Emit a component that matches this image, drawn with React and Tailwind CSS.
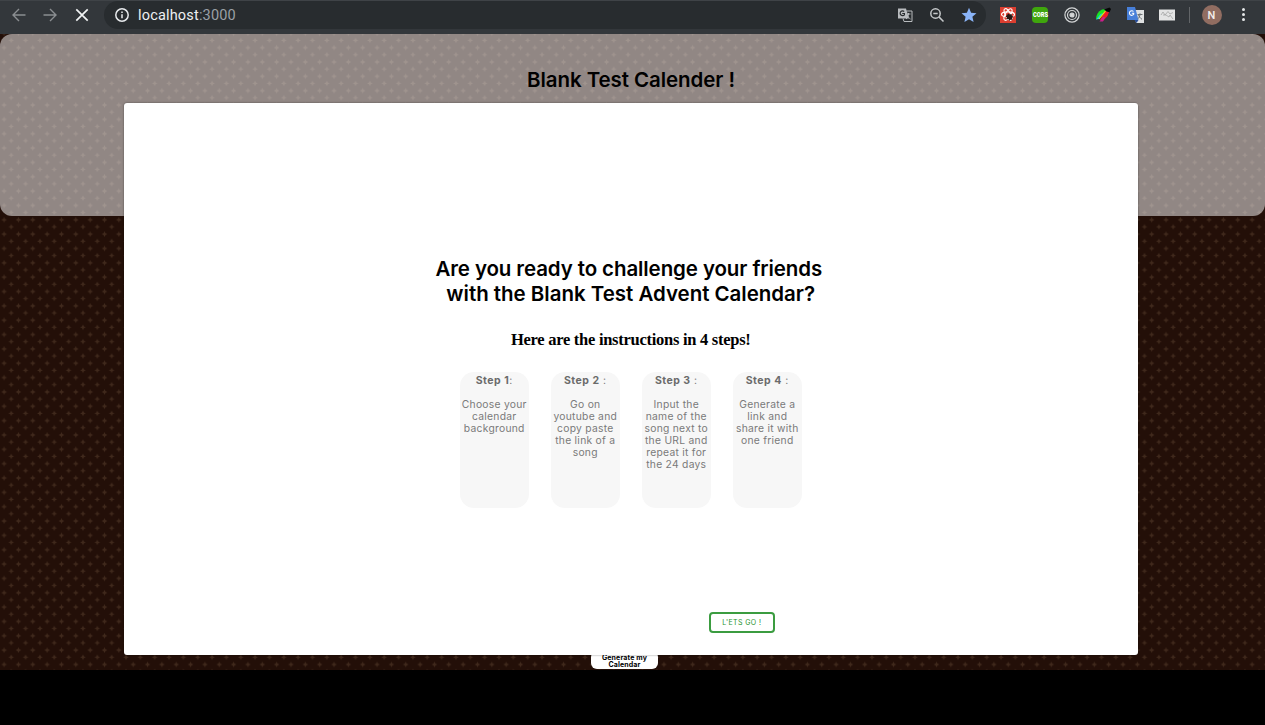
import React from "react";

const steps = [
  { n: "Step 1", c: ":", lines: ["Choose your", "calendar", "background"] },
  { n: "Step 2", c: " :", lines: ["Go on", "youtube and", "copy paste", "the link of a", "song"] },
  { n: "Step 3", c: " :", lines: ["Input the", "name of the", "song next to", "the URL and", "repeat it for", "the 24 days"] },
  { n: "Step 4", c: " :", lines: ["Generate a", "link and", "share it with", "one friend"] },
];

function Texture() {
  return (
    <svg className="absolute inset-0 h-full w-full" aria-hidden="true">
      <defs>
        <pattern id="dots" width="14.345" height="14.345" patternUnits="userSpaceOnUse" patternTransform="translate(-3.1 -4.5)">
          <g fill="#40291c">
            <path d="M7.2 1 8.100 2.900l1.900.9-1.900.9-.9 1.900-.9-1.900-1.900-.9 1.900-.9z" />
            <path d="M14.345 8.100l.9 1.900 1.900.9-1.900.9-.9 1.900-.9-1.900-1.900-.9 1.900-.9z" />
            <path d="M0 8.100l.9 1.900 1.900.9-1.900.9-.9 1.900-.9-1.900-1.900-.9 1.900-.9z" />
          </g>
        </pattern>
      </defs>
      <rect width="100%" height="100%" fill="url(#dots)" />
    </svg>
  );
}

function BrowserBar() {
  return (
    <header className="relative flex h-[33.500px] shrink-0 items-center border-t border-[#3f4347] bg-[#33373b] pb-[5px]">
      <svg className="ml-[11px] h-4 w-4" viewBox="0 0 16 16" fill="none" stroke="#8b8e91" strokeWidth="1.4">
        <path d="M14.500 8H2M8 2 2 8l6 6" />
      </svg>
      <svg className="ml-[15px] h-4 w-4" viewBox="0 0 16 16" fill="none" stroke="#8b8e91" strokeWidth="1.4">
        <path d="M1.500 8H14M8 2l6 6-6 6" />
      </svg>
      <svg className="ml-[16px] h-4 w-4" viewBox="0 0 16 16" fill="none" stroke="#f1f3f4" strokeWidth="1.700">
        <path d="m2.300 2.300 11.400 11.400m0-11.400L2.300 13.700" />
      </svg>
      <div className="ml-[14px] flex h-7 w-[882px] items-center rounded-full bg-[#282c2f] pl-[10px]">
        <svg className="h-4 w-4" viewBox="0 0 16 16" fill="none" stroke="#e8eaed" strokeWidth="1.500">
          <circle cx="8" cy="8" r="6.200" />
          <path d="M8 7.200v4M8 4.400v1.500" />
        </svg>
        <span className="ml-[8px] pt-[2px] font-[Roboto,sans-serif] text-[14.500px] leading-4 tracking-[0.18px] text-[#9aa0a6]">
          <span className="text-[#eef0f2]">localhost</span>:3000
        </span>
        <svg className="ml-[661px] h-4 w-4" viewBox="0 0 16 16">
          <path d="M1 1.500h8l3 10H1z" fill="#b9bcbf" />
          <path d="M9.500 4H15v10.500H7L6 11.500" fill="none" stroke="#b9bcbf" />
          <path d="M7.200 4.500A2.400 2.400 0 1 0 7.400 7.800V6.500H5.200" fill="none" stroke="#282c2f" strokeWidth="1.200" />
          <path d="M9.500 7h4M11.500 6v1c0 2-1 4-2.500 5m1-4c.6 1.500 2 3 3.500 4" fill="none" stroke="#b9bcbf" />
        </svg>
        <svg className="ml-[16px] h-4 w-4" viewBox="0 0 16 16" fill="none" stroke="#c5c8ca" strokeWidth="1.500">
          <circle cx="6.500" cy="6.500" r="4.700" />
          <path d="M4.300 6.500h4.400M9.900 9.900l4.600 4.600" />
        </svg>
        <svg className="ml-[16px] h-4 w-4" viewBox="0 0 16 16" fill="#8ab4f8">
          <path d="m8 .7 2.100 5 5.400.5-4.100 3.600 1.200 5.300L8 12.300l-4.600 2.800 1.200-5.300L.5 6.200l5.400-.5z" />
        </svg>
      </div>
      <svg className="ml-[14px] h-4 w-4" viewBox="0 0 16 16">
        <path fill="#dc3e30" d="M0 0h16v16H0z" />
        <g fill="none" stroke="#fff" strokeWidth="1.100">
          <ellipse cx="8" cy="7.500" rx="6.500" ry="2.600" />
          <ellipse cx="8" cy="7.500" rx="6.500" ry="2.600" transform="rotate(60 8 7.500)" />
          <ellipse cx="8" cy="7.500" rx="6.500" ry="2.600" transform="rotate(120 8 7.500)" />
        </g>
        <path d="m7 8 1.500-1.500 1 1 2-.5.5 2 1.500.5-1.500 1.500.5 2-2-.5-1 1.500-1-2-2 .5.500-2-1.500-1z" fill="#241713" />
      </svg>
      <span className="ml-[16px] flex h-4 w-4 items-center justify-center rounded-sm bg-[#3fa60d] text-white">
        <span className="origin-center scale-x-[0.720] font-[Roboto,sans-serif] text-[8px] leading-none font-black">CORS</span>
      </span>
      <svg className="ml-[16px] h-4 w-4" viewBox="0 0 16 16" fill="none" stroke="#d4d6d7" strokeWidth="1.200">
        <circle cx="8" cy="8" r="7.100" />
        <circle cx="8" cy="8" r="4.500" />
        <circle cx="8" cy="8" r="2" fill="#d4d6d7" />
      </svg>
      <svg className="ml-[15px] h-4 w-4" viewBox="0 0 16 16">
        <path d="M1 12.500C1 8 3 4.500 7 2.500l5-.5-5 7z" fill="#1be222" />
        <path d="M1 12.500 5.500 7 8 6l-4 6z" fill="#20cddd" />
        <path d="m5 13 5-9 4 1-1.500 4-4.500 5z" fill="#f01a28" />
        <path d="M4.500 14.500 8 10l2 0-2 4.500z" fill="#c7208f" />
        <path d="m4 12 6.500-8" stroke="#eee615" strokeWidth="1.100" />
        <path d="M9 2.500 14.500.6 16 2l-1.500 3.300-3-1z" fill="#060606" />
      </svg>
      <svg className="ml-[16px] h-4 w-[17px]" viewBox="0 0 17 16">
        <path d="M7 3h10v13H9z" fill="#dfe1e2" />
        <path d="M0 0h8l3.500 13H0z" fill="#477fd9" />
        <path d="M11.500 13H7.500l2 3z" fill="#244c9b" />
        <path d="M6.500 4.500A2.300 2.300 0 1 0 6.700 7.300V6.200H4.800" fill="none" stroke="#fff" strokeWidth="1.100" />
        <path d="M10.500 7.500h5M13 6.300v1.200c-.2 2-1 3.500-2.300 4.500m.8-4c.7 1.800 2 3.400 3.500 4.300" fill="none" stroke="#6c7276" />
      </svg>
      <svg className="ml-[15px] h-4 w-4" viewBox="0 0 16 16">
        <path d="M0 2.500h16v11H0z" fill="#e3e4e4" />
        <path d="M2 8 4 5l2 3 3-3.500 2 2.500 3-1.500M7 8l3 2 1-2 3 4M4 8h3" fill="none" stroke="#a3a4a5" strokeWidth=".8" />
      </svg>
      <div className="ml-[14px] h-4 w-px bg-[#626568]" />
      <div className="ml-[11.500px] flex h-5 w-5 items-center justify-center rounded-full bg-[#916d61] pt-px font-[Roboto,sans-serif] text-[11px] leading-none font-medium text-[#f4efed]">N</div>
      <div className="ml-[20px] flex w-1 flex-col items-center gap-[2px]">
        <i className="h-[3px] w-[3px] rounded-full bg-[#e5e7e8]" />
        <i className="h-[3px] w-[3px] rounded-full bg-[#e5e7e8]" />
        <i className="h-[3px] w-[3px] rounded-full bg-[#e5e7e8]" />
      </div>
    </header>
  );
}

export default function App() {
  return (
    <div className="flex h-[725px] w-[1265px] flex-col overflow-hidden bg-black font-[Inter,sans-serif] text-black">
      <BrowserBar />
      <main className="relative h-[636px] shrink-0 bg-[#230f08]">
        <Texture />
        <section className="relative h-[182px] rounded-[12px] bg-[#fcfcfe]/51 pt-[33px] text-center">
          <h1 className="-ml-[3px] text-[20.500px] leading-[25px] font-semibold tracking-[-0.080px]">Blank Test Calender !</h1>
        </section>
        <button className="absolute top-[617px] left-[591px] h-[18.500px] w-[67px] rounded-[6px] bg-white pt-[2px] text-[7px] leading-[7px] font-bold tracking-[0.150px]">
          Generate my<br />Calendar
        </button>
        <section className="absolute top-[69px] left-[123.500px] flex h-[552.500px] w-[1014.500px] flex-col items-center rounded-[3px] bg-white pt-[153px] shadow-[0_0_2px_rgba(0,0,0,0.5)]">
          <h2 className="text-center text-[20.500px] leading-[25px] font-semibold tracking-[-0.100px] whitespace-pre">
            <span className="relative -left-[2px]">Are you ready to challenge your friends</span><br /><span className="tracking-[-0.020px]">with the Blank Test Advent Calendar?</span>
          </h2>
          <h3 className="mt-[24px] font-['Liberation_Serif',serif] text-[16.500px] leading-5 font-bold tracking-[-0.270px]">Here are the instructions in 4 steps!</h3>
          <div className="mt-[22px] flex gap-[22px]">
            {steps.map((step) => (
              <article key={step.n} className="h-[136px] w-[69px] rounded-[14px] bg-[#f7f7f7] pt-[3px] text-center text-[10.300px] leading-3 tracking-[0.270px] whitespace-pre text-[#7a7a7a]">
                <p className="text-[10.500px] tracking-[0.500px]"><b className="font-bold text-[#6b6b6b]">{step.n}</b>{step.c}</p>
                <div className="mt-[11px] flex flex-col items-center">
                  {step.lines.map((line) => <span key={line}>{line}</span>)}
                </div>
              </article>
            ))}
          </div>
          <button className="mt-[104px] ml-[222px] h-[21px] w-[66px] shrink-0 rounded-[4px] border-2 border-[#3b9c40] text-[7px] leading-none tracking-[0.400px] text-[#27932d]">L'ETS GO !</button>
        </section>
      </main>
    </div>
  );
}
